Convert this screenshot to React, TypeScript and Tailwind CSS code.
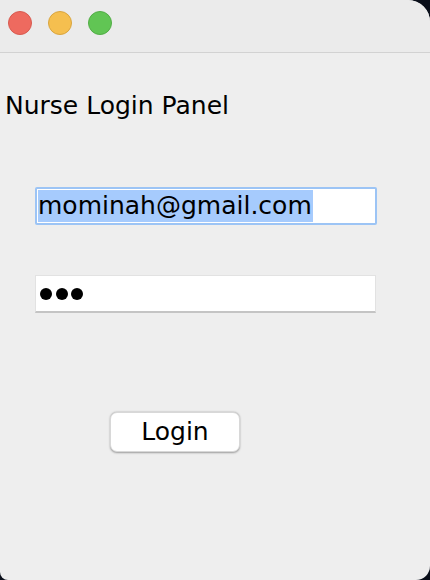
import React from "react";

export default function App() {
  return (
    <div className="w-[430px] h-[580px] bg-[#0a0f1a] overflow-hidden" style={{ fontFamily: '"DejaVu Sans", "Noto Sans", sans-serif' }}>
      <div className="w-[430px] h-[580px] bg-[#eeeeee] rounded-tr-[22px] rounded-br-[14px] rounded-bl-[8px] overflow-hidden flex flex-col">
        <div className="h-[53px] bg-[#ebebeb] border-b border-[#d2d2d2] flex items-center gap-4 pl-2 pb-[7px]">
          <div className="w-6 h-6 rounded-full bg-[#ee6a5f] border border-[#d85a50]" />
          <div className="w-6 h-6 rounded-full bg-[#f5bf4f] border border-[#d9a53f]" />
          <div className="w-6 h-6 rounded-full bg-[#61c554] border border-[#52ad46]" />
        </div>
        <div className="pl-[5px] pt-[38px] text-[25px] leading-[30px] text-black">Nurse Login Panel</div>
        <div className="ml-[35px] mt-[66px] w-[342px] h-[38px] bg-white border-2 border-[#9cc4f5] rounded-[2px] flex items-center pl-[1px]">
          <span className="bg-[#a6cbfd] text-[25px] leading-[32px] text-black pr-[1px]">mominah@gmail.com</span>
        </div>
        <div className="ml-[35px] mt-[50px] w-[341px] h-[38px] bg-white border border-[#e2e2e2] border-b-[#c4c4c4] border-b-2 flex items-center gap-[3.5px] pl-[4px]">
          <div className="w-[12px] h-[12px] rounded-full bg-black" />
          <div className="w-[12px] h-[12px] rounded-full bg-black" />
          <div className="w-[12px] h-[12px] rounded-full bg-black" />
        </div>
        <div className="ml-[110px] mt-[99px] w-[130px] h-[40px] bg-white rounded-[7px] shadow-[0_0.5px_2px_rgba(0,0,0,0.35)] border border-[#d8d8d8] flex items-center justify-center text-[25px] text-black">
          Login
        </div>
      </div>
    </div>
  );
}
